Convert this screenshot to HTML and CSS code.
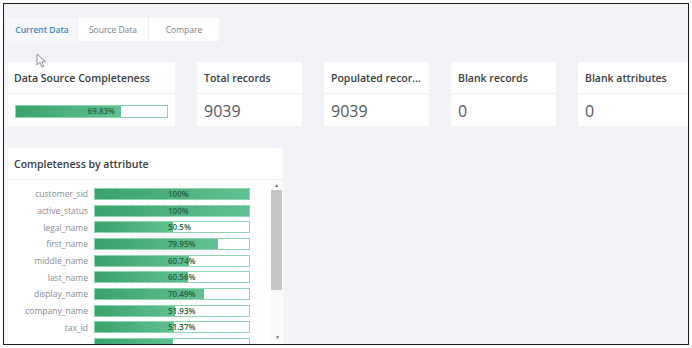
FILE: index.html
```html
<!DOCTYPE html>
<html>
  <head>
    <meta charset="utf-8">
    <title>Completeness</title>
    <link rel="stylesheet" href="styles.css">
  </head>
  <body>
    <div class="frame">
      <div class="tabs">
        <div class="tab tab_active">Current Data</div>
        <div class="tab">Source Data</div>
        <div class="tab">Compare</div>
      </div>

      <svg class="cursor" width="11" height="15" viewBox="0 0 11 15">
        <path d="M1 1 L1 12 L3.8 9.4 L6 14 L7.8 13.2 L5.7 8.8 L9.6 8.8 Z" fill="#fff" stroke="#8a8d94" stroke-width="1" stroke-linejoin="round"/>
      </svg>

      <div class="stats">
        <div class="card card_wide">
          <div class="card__head">Data Source Completeness</div>
          <div class="card__body">
            <div class="bar bar_card">
              <div class="bar__fill" style="width: 69.83%"></div>
              <span class="bar__text">69.83%</span>
            </div>
          </div>
        </div>
        <div class="card">
          <div class="card__head">Total records</div>
          <div class="card__body card__value">9039</div>
        </div>
        <div class="card">
          <div class="card__head">Populated recor...</div>
          <div class="card__body card__value">9039</div>
        </div>
        <div class="card">
          <div class="card__head">Blank records</div>
          <div class="card__body card__value">0</div>
        </div>
        <div class="card card_last">
          <div class="card__head">Blank attributes</div>
          <div class="card__body card__value">0</div>
        </div>
      </div>

      <div class="panel">
        <div class="panel__head">Completeness by attribute</div>
        <div class="panel__body">
          <div class="rows">
            <div class="row"><span class="row__label">customer_sid</span><div class="bar"><div class="bar__fill" style="width: 100%"></div><span class="bar__text">100%</span></div></div>
            <div class="row"><span class="row__label">active_status</span><div class="bar"><div class="bar__fill" style="width: 100%"></div><span class="bar__text">100%</span></div></div>
            <div class="row"><span class="row__label">legal_name</span><div class="bar"><div class="bar__fill" style="width: 50.5%"></div><span class="bar__text">50.5%</span></div></div>
            <div class="row"><span class="row__label">first_name</span><div class="bar"><div class="bar__fill" style="width: 79.95%"></div><span class="bar__text">79.95%</span></div></div>
            <div class="row"><span class="row__label">middle_name</span><div class="bar"><div class="bar__fill" style="width: 60.74%"></div><span class="bar__text">60.74%</span></div></div>
            <div class="row"><span class="row__label">last_name</span><div class="bar"><div class="bar__fill" style="width: 60.56%"></div><span class="bar__text">60.56%</span></div></div>
            <div class="row"><span class="row__label">display_name</span><div class="bar"><div class="bar__fill" style="width: 70.49%"></div><span class="bar__text">70.49%</span></div></div>
            <div class="row"><span class="row__label">company_name</span><div class="bar"><div class="bar__fill" style="width: 51.93%"></div><span class="bar__text">51.93%</span></div></div>
            <div class="row"><span class="row__label">tax_id</span><div class="bar"><div class="bar__fill" style="width: 51.37%"></div><span class="bar__text">51.37%</span></div></div>
            <div class="row"><span class="row__label"></span><div class="bar"><div class="bar__fill" style="width: 50.6%"></div></div></div>
          </div>
          <div class="scroll">
            <span class="scroll__arrow">&#9650;</span>
            <div class="scroll__thumb"></div>
            <div class="scroll__rest"></div>
          </div>
        </div>
      </div>
      <span class="scroll__down">&#9660;</span>
    </div>
  </body>
</html>
```

FILE: styles.css
```css
html {
  background: #fff;
}

body {
  margin: 0;
  padding: 0;
  font-family: "Open Sans", "Liberation Sans", sans-serif;
  color: #333;
}

.frame {
  position: relative;
  margin: 3px;
  padding: 14px 0 0 0;
  box-sizing: border-box;
  width: 686px;
  height: 342px;
  border: 1px solid #1c1c1c;
  background: #f2f3f7;
  overflow: hidden;
}

.tabs {
  display: flex;
  margin-left: 3px;
  height: 23px;
}

.tab {
  display: flex;
  align-items: center;
  justify-content: center;
  width: 70px;
  font-size: 8.5px;
  color: #7d8087;
  background: #fff;
  border-right: 1px solid #eceef2;
}

.tab:last-child {
  border-right: none;
}

.tab_active {
  color: #3c86c9;
  font-weight: 600;
  background: #f7f8fb;
}

.cursor {
  position: absolute;
  left: 32px;
  top: 49px;
}

.stats {
  display: flex;
  gap: 22px;
  margin: 21px 0 0 4px;
  height: 64px;
}

.card {
  width: 105px;
  flex: none;
  background: #fff;
  display: flex;
  flex-direction: column;
}

.card_wide {
  width: 167px;
}

.card_last {
  flex: 1;
  width: auto;
}

.card__head {
  height: 31px;
  border-bottom: 1px solid #eceef2;
  display: flex;
  align-items: center;
  padding-left: 7px;
  font-size: 10.5px;
  font-weight: 600;
  color: #3a3c40;
  white-space: nowrap;
}

.card_wide .card__head {
  padding-left: 6px;
}

.card__body {
  flex: 1;
  display: flex;
  align-items: center;
  padding: 0 7px;
}

.card__value {
  font-size: 16px;
  color: #55575c;
  padding-top: 1px;
}

.bar {
  position: relative;
  width: 156px;
  height: 12px;
  box-sizing: border-box;
  border: 1px solid #8fd5b0;
  background: #fff;
}

.bar_card {
  width: 154px;
  height: 13px;
  margin-top: 2px;
}

.bar__fill {
  height: 100%;
  background: linear-gradient(to right, #3aa26b, #62c192);
}

.bar__text {
  position: absolute;
  left: 47.4%;
  top: 0;
  line-height: 10px;
  font-size: 8px;
  font-weight: 600;
  color: #25603f;
}

.panel {
  margin: 22px 0 0 4px;
  width: 275px;
  background: #fff;
  height: 200px;
}

.panel__head {
  height: 31px;
  border-bottom: 1px solid #eceef2;
  display: flex;
  align-items: center;
  padding-left: 6px;
  font-size: 10.5px;
  font-weight: 600;
  color: #3a3c40;
}

.panel__body {
  display: flex;
  height: 170px;
}

.rows {
  flex: 1;
  padding-top: 5.5px;
  background: repeating-linear-gradient(to right, transparent 0, transparent 15px, #f6f7f8 15px, #f6f7f8 16px);
  background-position: 93px 0;
  background-size: 156px 100%;
  background-repeat: no-repeat;
}

.row {
  display: flex;
  align-items: center;
  height: 16.7px;
}

.row__label {
  width: 80px;
  text-align: right;
  font-size: 8.5px;
  color: #8a8c91;
  margin-right: 6px;
}

.scroll {
  width: 11px;
  margin-right: 1px;
  display: flex;
  flex-direction: column;
  align-items: center;
  background: #fafafa;
}

.scroll__arrow {
  font-size: 5px;
  line-height: 10px;
  color: #6e6e6e;
}

.scroll__thumb {
  width: 11px;
  height: 100px;
  background: #c6c6c6;
}

.scroll__rest {
  flex: 1;
}

.scroll__down {
  position: absolute;
  left: 271px;
  top: 329px;
  font-size: 5px;
  line-height: 8px;
  color: #6e6e6e;
}
```
